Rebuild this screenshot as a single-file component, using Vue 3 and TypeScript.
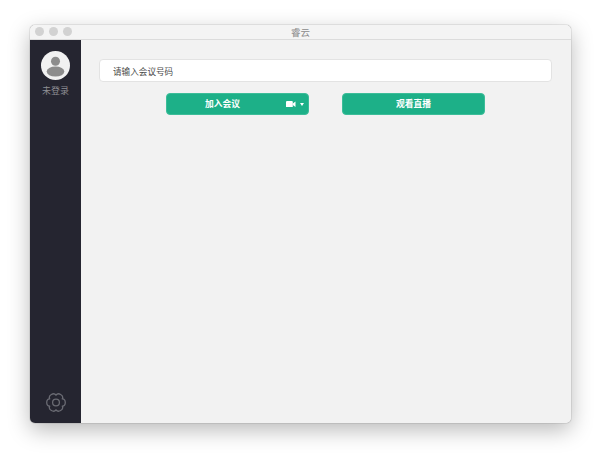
<script setup lang="ts">
const lights: number[] = [1, 2, 3]

// Six rounded lobes around the settings icon's centre
function gearPath(cx: number, cy: number): string {
  const pt = (r: number, deg: number): string => {
    const a = (deg * Math.PI) / 180
    return `${(cx + r * Math.cos(a)).toFixed(2)} ${(cy + r * Math.sin(a)).toFixed(2)}`
  }
  let d = `M${pt(7.3, -30)}`
  for (let k = 0; k < 6; k++) {
    const a = k * 60
    d += `C${pt(10.8, a - 18)} ${pt(10.8, a + 18)} ${pt(7.3, a + 30)}`
  }
  return d + 'Z'
}
const gear = gearPath(10, 9.5)
</script>

<template>
  <div class="page">
    <div class="window">
      <header class="titlebar">
        <div class="lights">
          <span v-for="l in lights" :key="l" class="light"></span>
        </div>
        <span class="title">睿云</span>
      </header>
      <div class="body">
        <aside class="sidebar">
          <div class="user">
            <svg class="avatar" width="29" height="29" viewBox="0 0 29 29">
              <circle cx="14.5" cy="14.500" r="14.500" fill="#f1f1f1" />
              <circle cx="14.500" cy="10.200" r="4.500" fill="#8c8c8c" />
              <ellipse cx="14.500" cy="20.600" rx="8.800" ry="5" fill="#8c8c8c" />
            </svg>
            <span class="username">未登录</span>
          </div>
          <svg class="gear" width="20" height="20" viewBox="0 0 20 20" fill="none" stroke="#6a6b73" stroke-width="1.3" stroke-linejoin="round">
            <path :d="gear" />
            <circle cx="10" cy="9.500" r="3.400" />
          </svg>
        </aside>
        <main class="content">
          <div class="input-box">请输入会议号码</div>
          <div class="actions">
            <button class="btn btn-join" type="button">
              <span class="btn-label">加入会议</span>
              <span class="btn-tools">
                <svg class="cam" width="9.500" height="6.500" viewBox="0 0 9.500 6.500">
                  <rect x="0" y="0" width="6.800" height="6.500" rx="1" fill="#fff" />
                  <path d="M6.800 2.600 9.500 .5v5.500L6.800 3.900z" fill="#fff" />
                </svg>
                <i class="caret"></i>
              </span>
            </button>
            <button class="btn" type="button">
              <span class="btn-label">观看直播</span>
            </button>
          </div>
        </main>
      </div>
    </div>
  </div>
</template>

<style>
html,
body {
  margin: 0;
  background: #fff;
}
</style>

<style scoped>
.page {
  width: 600px;
  height: 459px;
  box-sizing: border-box;
  padding: 25px 29px 36px 30px;
  overflow: hidden;
  font-family: "Liberation Sans", "Noto Sans CJK SC", sans-serif;
}
.window {
  height: 100%;
  display: flex;
  flex-direction: column;
  border-radius: 5px;
  overflow: hidden;
  background: #f2f2f2;
  box-shadow: 0 0 1px rgba(0, 0, 0, 0.7), 0 7px 22px rgba(0, 0, 0, 0.28);
}
.titlebar {
  position: relative;
  height: 14px;
  flex: none;
  display: flex;
  align-items: center;
  justify-content: center;
  background: #f4f4f4;
  border-bottom: 1px solid #dcdcdc;
}
.lights {
  position: absolute;
  left: 5px;
  top: 2px;
  display: flex;
  gap: 5px;
}
.light {
  width: 9px;
  height: 9px;
  border-radius: 50%;
  background: #d2d2d2;
}
.title {
  font-size: 9.500px;
  line-height: 15px;
  color: #8a8a8a;
}
.body {
  flex: 1;
  display: flex;
  min-height: 0;
}
.sidebar {
  width: 51px;
  flex: none;
  display: flex;
  flex-direction: column;
  align-items: center;
  justify-content: space-between;
  padding: 11px 0 10px;
  box-sizing: border-box;
  background: #252530;
}
.user {
  display: flex;
  flex-direction: column;
  align-items: center;
}
.avatar {
  display: block;
}
.username {
  margin-top: 4px;
  font-size: 9px;
  line-height: 14px;
  color: #8f8f94;
}
.gear {
  display: block;
}
.content {
  flex: 1;
  padding: 19px 19px 0 18px;
  background: #f2f2f2;
}
.input-box {
  box-sizing: border-box;
  height: 23px;
  padding: 2px 0 0 13px;
  background: #fff;
  border: 1px solid #e3e3e3;
  border-radius: 4px;
  font-size: 8.600px;
  line-height: 20px;
  color: #4a4a4a;
}
.actions {
  margin-top: 11px;
  display: flex;
  justify-content: center;
  gap: 33px;
}
.btn {
  position: relative;
  width: 143px;
  height: 22px;
  padding: 0;
  border: 1px solid #3cbd99;
  border-radius: 4px;
  background: #1db088;
  color: #fff;
  font-family: inherit;
  font-size: 8.750px;
  font-weight: 700;
  line-height: 20px;
  text-align: center;
}
.btn-join .btn-label {
  display: block;
  margin-left: -30px;
}
.btn-tools {
  position: absolute;
  right: 4.500px;
  top: 0;
  height: 20px;
  display: flex;
  align-items: center;
  gap: 4px;
}
.cam {
  display: block;
}
.caret {
  display: block;
  width: 0;
  height: 0;
  border-left: 2.500px solid transparent;
  border-right: 2.500px solid transparent;
  border-top: 3px solid #fff;
}
</style>
